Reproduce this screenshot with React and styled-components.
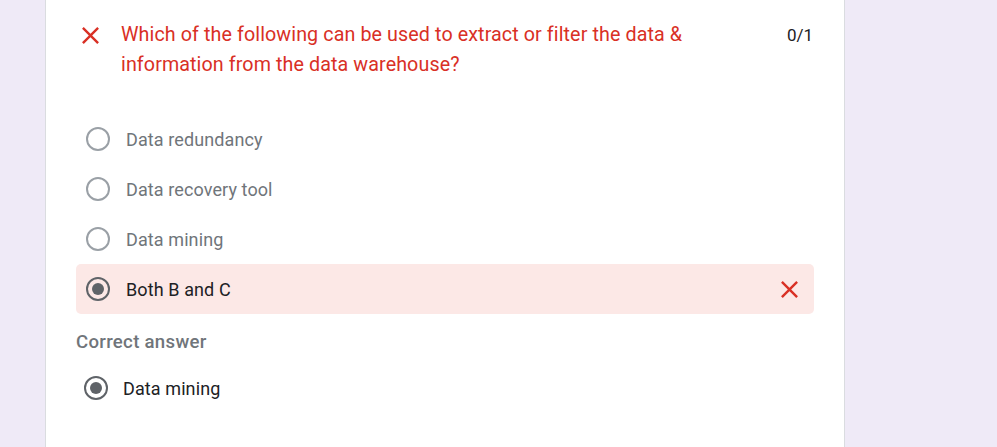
import React from 'react';
import styled, { createGlobalStyle } from 'styled-components';

const GlobalStyle = createGlobalStyle`
  body {
    margin: 0;
    background-color: #efeaf7;
    font-family: Roboto, 'Liberation Sans', Arial, sans-serif;
  }
`;

const Page = styled.div`
  min-height: 447px;
  padding-left: 45px;
`;

const Card = styled.div`
  width: 800px;
  min-height: 447px;
  box-sizing: border-box;
  background-color: #fff;
  border-left: 1px solid #dadce0;
  border-right: 1px solid #dadce0;
  padding: 20px 30px 0 30px;
`;

const QuestionRow = styled.div`
  display: flex;
  align-items: flex-start;
`;

const QuestionIcon = styled.div`
  width: 29px;
  height: 29px;
  margin-top: 1px;
  margin-right: 16px;
  flex-shrink: 0;
`;

const QuestionText = styled.div`
  flex: 1;
  color: #d93025;
  font-size: 19.7px;
  line-height: 30px;
  letter-spacing: 0.1px;
  padding-right: 40px;
`;

const Score = styled.div`
  color: #202124;
  font-size: 17px;
  line-height: 30px;
  flex-shrink: 0;
  padding-right: 1px;
`;

const Options = styled.div`
  display: flex;
  flex-direction: column;
  margin-top: 34px;
`;

const OptionRow = styled.div`
  display: flex;
  align-items: center;
  height: 50px;
  margin-top: ${p => (p.$inset ? 9 : 0)}px;
  padding-left: ${p => (p.$inset ? 8 : 10)}px;
  padding-right: 10px;
  border-radius: 5px;
  background-color: ${p => (p.$wrong ? '#fce8e6' : 'transparent')};
`;

const Radio = styled.span`
  box-sizing: border-box;
  width: 24px;
  height: 24px;
  border-radius: 50%;
  border: 2px solid ${p => (p.$checked ? '#5f6368' : '#9aa0a6')};
  display: flex;
  align-items: center;
  justify-content: center;
  flex-shrink: 0;
  &::after {
    content: '';
    display: ${p => (p.$checked ? 'block' : 'none')};
    width: 12px;
    height: 12px;
    border-radius: 50%;
    background-color: #5f6368;
  }
`;

const Label = styled.span`
  flex: 1;
  margin-left: ${p => (p.$inset ? 15 : 16)}px;
  font-size: 18px;
  color: ${p => (p.$checked ? '#202124' : '#70757a')};
  letter-spacing: 0.1px;
`;

const MarkIcon = styled.span`
  width: 29px;
  height: 29px;
  display: flex;
  flex-shrink: 0;
`;

const CorrectHeading = styled.div`
  margin-top: 16px;
  color: #70757a;
  font-size: 18.6px;
  font-weight: 500;
  line-height: 24px;
  letter-spacing: 0.3px;
`;

const CloseIcon = () => (
  <svg width="29" height="29" viewBox="0 0 24 24" fill="#d93025">
    <path d="M19 6.41L17.59 5 12 10.59 6.41 5 5 6.41 10.59 12 5 17.59 6.41 19 12 13.41 17.59 19 19 17.59 13.41 12z" />
  </svg>
);

const options = [
  { label: 'Data redundancy' },
  { label: 'Data recovery tool' },
  { label: 'Data mining' },
  { label: 'Both B and C', checked: true, wrong: true },
];

export default function App() {
  return (
    <Page>
      <GlobalStyle />
      <Card>
        <QuestionRow>
          <QuestionIcon>
            <CloseIcon />
          </QuestionIcon>
          <QuestionText>
            Which of the following can be used to extract or filter the data &amp; information from the data warehouse?
          </QuestionText>
          <Score>0/1</Score>
        </QuestionRow>

        <Options>
          {options.map(o => (
            <OptionRow key={o.label} $wrong={o.wrong}>
              <Radio $checked={o.checked} />
              <Label $checked={o.checked}>{o.label}</Label>
              {o.wrong && (
                <MarkIcon>
                  <CloseIcon />
                </MarkIcon>
              )}
            </OptionRow>
          ))}
        </Options>

        <CorrectHeading>Correct answer</CorrectHeading>
        <OptionRow $inset>
          <Radio $checked />
          <Label $checked $inset>Data mining</Label>
        </OptionRow>
      </Card>
    </Page>
  );
}
